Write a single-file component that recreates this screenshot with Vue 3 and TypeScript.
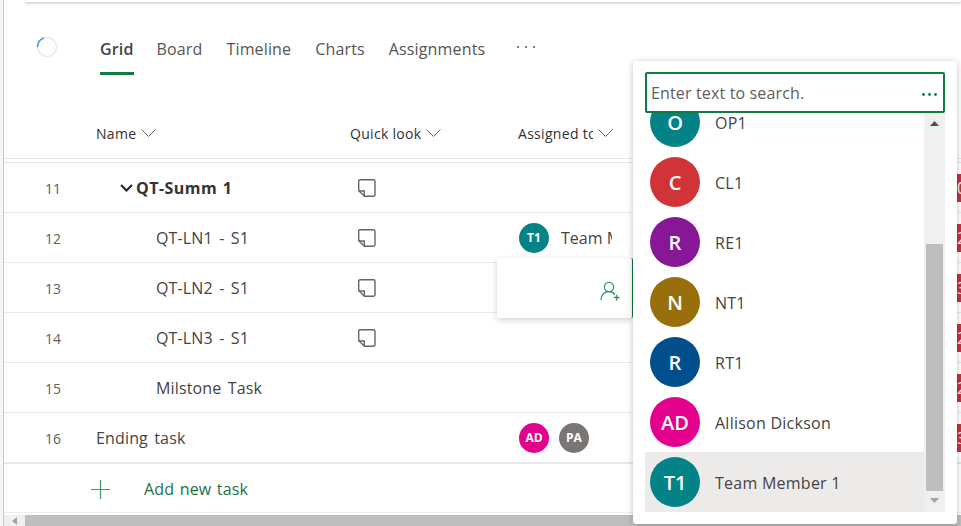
<template>
  <div class="page">
    <div class="gutter"></div>
    <div class="main">
      <div class="top-card"></div>

      <div class="toolbar">
        <svg class="spinner" width="24" height="24" viewBox="0 0 24 24">
          <circle cx="12" cy="12" r="9.5" fill="none" stroke="#deecf9" stroke-width="1.5" />
          <path d="M2.5 12A9.5 9.5 0 0 1 9 3" fill="none" stroke="#4a9be0" stroke-width="1.5" />
        </svg>
        <div class="tabs">
          <span
            v-for="tab in tabs"
            :key="tab"
            class="tab"
            :class="{ active: tab === 'Grid' }"
          >{{ tab }}</span>
        </div>
        <svg class="more" width="20" height="4" viewBox="0 0 20 4">
          <circle cx="2" cy="2" r="1.1" fill="#666" />
          <circle cx="10" cy="2" r="1.1" fill="#666" />
          <circle cx="18" cy="2" r="1.1" fill="#666" />
        </svg>
      </div>

      <div class="head">
        <div></div>
        <div class="head-cell">
          <span>Name</span>
          <svg class="chev" width="15" height="8" viewBox="0 0 15 8"><path d="M.5.5l7 7 7-7" /></svg>
        </div>
        <div class="head-cell">
          <span>Quick look</span>
          <svg class="chev" width="15" height="8" viewBox="0 0 15 8"><path d="M.5.5l7 7 7-7" /></svg>
        </div>
        <div class="head-cell">
          <span class="head-clip">Assigned to</span>
          <svg class="chev" width="15" height="8" viewBox="0 0 15 8"><path d="M.5.5l7 7 7-7" /></svg>
        </div>
      </div>

      <div class="rows">
        <div v-for="row in rows" :key="row.num" class="row">
          <div class="num">{{ row.num }}</div>
          <div class="name" :class="{ indent: row.indent, summary: row.summary }">
            <svg v-if="row.summary" class="caret" width="13" height="8" viewBox="0 0 13 8">
              <path d="M1 1l5.5 5.5L12 1" />
            </svg>
            {{ row.name }}
          </div>
          <div class="look">
            <svg v-if="row.note" width="18" height="18" viewBox="0 0 18 18" class="note">
              <path d="M2 .7h13.4a1.6 1.6 0 0 1 1.6 1.6v13.4a1.6 1.6 0 0 1-1.6 1.6H6.5L.7 11.8V2A1.3 1.3 0 0 1 2 .7z" />
              <path d="M.9 12H6.3v5.2" />
            </svg>
          </div>
          <div class="assigned">
            <span
              v-for="p in row.people"
              :key="p.initials"
              class="small-avatar"
              :style="{ background: p.color }"
            >{{ p.initials }}</span>
            <span v-if="row.assignee" class="assignee">{{ row.assignee }}</span>
          </div>
          <div class="spacer"></div>
          <div class="due"><span v-if="row.due" class="due-badge">{{ row.due }}</span></div>
        </div>
      </div>

      <div class="add-row">
        <svg width="19" height="19" viewBox="0 0 19 19" class="plus">
          <path d="M9.5 0v19M0 9.5h19" />
        </svg>
        <span class="add-label">Add new task</span>
      </div>

      <div class="hscroll">
        <svg width="5" height="8" viewBox="0 0 5 8"><path d="M5 0v8L0 4z" fill="#a3a3a3" /></svg>
        <div class="hthumb"></div>
      </div>
    </div>

    <div class="callout">
      <svg width="20" height="20" viewBox="0 0 20 20" class="add-person">
        <circle cx="9" cy="6" r="4.6" />
        <path d="M1 19c.4-5 3.4-8.3 8-8.3 2.600 0 4.700 1 6 3" />
        <path d="M13.800 16.500h5.700M16.700 13.700v5.700" />
      </svg>
    </div>

    <div class="picker">
      <div class="search">
        <span class="placeholder">Enter text to search.</span>
        <svg width="15" height="3" viewBox="0 0 15 3">
          <circle cx="1.500" cy="1.500" r="1.400" fill="#107c41" />
          <circle cx="7.500" cy="1.500" r="1.400" fill="#107c41" />
          <circle cx="13.500" cy="1.500" r="1.400" fill="#107c41" />
        </svg>
      </div>
      <div class="results">
        <div class="people">
          <div
            v-for="p in people"
            :key="p.name"
            class="person"
            :class="{ selected: p.selected }"
          >
            <span class="avatar" :style="{ background: p.color }">{{ p.initials }}</span>
            <span class="person-name">{{ p.name }}</span>
          </div>
        </div>
        <div class="vscroll">
          <svg width="9" height="5" viewBox="0 0 9 5" class="arrow-up"><path d="M0 5h9L4.500 0z" /></svg>
          <div class="vthumb"></div>
          <svg width="9" height="5" viewBox="0 0 9 5" class="arrow-down"><path d="M0 0h9L4.500 5z" /></svg>
        </div>
      </div>
    </div>
  </div>
</template>

<script setup lang="ts">
interface Person {
  initials: string
  color: string
}

interface Row {
  num: number
  name: string
  indent?: boolean
  summary?: boolean
  note?: boolean
  people?: Person[]
  assignee?: string
  due?: string
}

const tabs = ['Grid', 'Board', 'Timeline', 'Charts', 'Assignments']

const rows: Row[] = [
  { num: 11, name: 'QT-Summ 1', summary: true, note: true, due: '0' },
  {
    num: 12,
    name: 'QT-LN1 - S1',
    indent: true,
    note: true,
    people: [{ initials: 'T1', color: '#038387' }],
    assignee: 'Team Member 1',
    due: '2',
  },
  { num: 13, name: 'QT-LN2 - S1', indent: true, note: true, due: '3' },
  { num: 14, name: 'QT-LN3 - S1', indent: true, note: true, due: '2' },
  { num: 15, name: 'Milstone Task', indent: true, due: '2' },
  {
    num: 16,
    name: 'Ending task',
    people: [
      { initials: 'AD', color: '#e3008c' },
      { initials: 'PA', color: '#7a7574' },
    ],
    due: '3',
  },
]

const people = [
  { initials: 'O', name: 'OP1', color: '#038387' },
  { initials: 'C', name: 'CL1', color: '#d13438' },
  { initials: 'R', name: 'RE1', color: '#881798' },
  { initials: 'N', name: 'NT1', color: '#986f0b' },
  { initials: 'R', name: 'RT1', color: '#004e8c' },
  { initials: 'AD', name: 'Allison Dickson', color: '#e3008c' },
  { initials: 'T1', name: 'Team Member 1', color: '#038387', selected: true },
]
</script>

<style scoped>
.page {
  position: relative;
  display: flex;
  width: 961px;
  height: 526px;
  overflow: hidden;
  background: #fff;
  font-family: "Open Sans", "Liberation Sans", sans-serif;
  color: #444;
}
.gutter {
  flex: 0 0 3px;
  background: #f6f6f6;
  border-right: 1px solid #c8c8c8;
}
.main {
  flex: 1;
  min-width: 0;
  display: flex;
  flex-direction: column;
}
.top-card {
  flex: 0 0 2px;
  margin-left: 21px;
  background: #fff;
  border-radius: 0 0 4px 4px;
  box-shadow: 0 1px 3px #0000004d;
}
.toolbar {
  flex: 0 0 73px;
  display: flex;
  align-items: flex-start;
}
.spinner {
  margin: 33px 0 0 31px;
}
.tabs {
  display: flex;
  gap: 24px;
  margin-left: 41px;
  padding-top: 36px;
}
.tab {
  height: 34px;
  font-size: 16px;
  line-height: 22px;
  letter-spacing: .15px;
  color: #555;
  border-bottom: 3px solid transparent;
}
.tab.active {
  margin-right: -1px;
  font-weight: 600;
  color: #444;
  border-bottom-color: #107c41;
}
.more {
  margin: 43px 0 0 31px;
}
.head {
  flex: 0 0 84px;
  display: grid;
  grid-template-columns: 92px 254px 168px 1fr;
  align-items: start;
  box-sizing: border-box;
  border-bottom: 1px solid #e6e6e6;
}
.head-cell {
  display: flex;
  align-items: center;
  gap: 5px;
  padding-top: 49px;
  font-size: 14px;
  line-height: 20px;
  letter-spacing: .3px;
  color: #323130;
}
.head-clip {
  width: 75px;
  overflow: hidden;
  white-space: nowrap;
}
.chev {
  margin-top: -3px;
  fill: none;
  stroke: #666;
}
.rows {
  margin-top: 3px;
  border-top: 1px solid #e6e6e6;
}
.row {
  height: 49px;
  display: grid;
  grid-template-columns: 92px 254px 168px 94px 1fr 4px;
  align-items: center;
  border-bottom: 1px solid #e8e8e8;
}
.row:last-child {
  border-bottom-width: 2px;
}
.num {
  margin-top: 1px;
  text-align: center;
  padding-left: 6px;
  font-size: 14px;
  color: #605e5c;
}
.name {
  font-size: 16px;
  letter-spacing: .15px;
  word-spacing: 2px;
  white-space: nowrap;
}
.name.indent {
  padding-left: 60px;
}
.name.summary {
  display: flex;
  align-items: center;
  gap: 3px;
  padding-left: 24px;
  font-weight: 700;
  letter-spacing: .45px;
  word-spacing: 1px;
  color: #333;
}
.caret {
  fill: none;
  stroke: #222;
  stroke-width: 2;
}
.look {
  display: flex;
  align-items: center;
  padding-left: 8px;
}
.note {
  fill: none;
  stroke: #666;
  stroke-width: 1.400;
}
.assigned {
  display: flex;
  align-items: center;
  gap: 10px;
  overflow: hidden;
  padding-left: 1px;
  grid-column: 4 / 5;
}
.small-avatar {
  flex: 0 0 30px;
  height: 30px;
  border-radius: 50%;
  display: flex;
  align-items: center;
  justify-content: center;
  font-size: 12px;
  font-weight: 700;
  color: #fff;
}
.assignee {
  margin-left: 2px;
  font-size: 16px;
  white-space: nowrap;
}
.spacer {
  grid-column: 5 / 6;
}
.due {
  height: 28px;
  grid-column: 6 / 7;
  overflow: hidden;
}
.due-badge {
  display: block;
  width: 30px;
  height: 28px;
  background: #c8313a;
  color: #fff;
  font-size: 16px;
  line-height: 28px;
}
.add-row {
  flex: 0 0 46px;
  display: flex;
  align-items: center;
  padding-top: 2px;
  border-bottom: 1px solid #eee;
}
.plus {
  margin-left: 87px;
  fill: none;
  stroke: #3f9a68;
  stroke-width: 1.200;
}
.add-label {
  margin-left: 34px;
  font-size: 16px;
  letter-spacing: .2px;
  word-spacing: 1px;
  color: #217346;
}
.hscroll {
  flex: 1;
  margin-top: 2px;
  display: flex;
  align-items: center;
  background: #f0f0f0;
}
.hscroll svg {
  margin-left: 8px;
}
.hthumb {
  align-self: stretch;
  flex: 1;
  margin-left: 8px;
  background: #bebebe;
}
.callout {
  position: absolute;
  left: 497px;
  top: 258px;
  width: 136px;
  height: 60px;
  box-sizing: border-box;
  display: flex;
  align-items: flex-end;
  justify-content: flex-end;
  padding: 0 12px 17px 0;
  background: #fff;
  border-right: 1px solid #107c41;
  border-radius: 2px;
  box-shadow: 0 2px 6px #0000002e;
}
.add-person {
  fill: none;
  stroke: #2f9460;
  stroke-width: 1.300;
}
.picker {
  position: absolute;
  left: 633px;
  top: 61px;
  width: 324px;
  height: 463px;
  box-sizing: border-box;
  padding: 11px 12px 12px;
  display: flex;
  flex-direction: column;
  background: #fff;
  border-radius: 3px;
  box-shadow: 0 1px 6px #00000040;
}
.search {
  flex: 0 0 41px;
  box-sizing: border-box;
  position: relative;
  z-index: 1;
  display: flex;
  align-items: center;
  justify-content: space-between;
  padding: 0 6px 0 4px;
  background: #fff;
  border: 2px solid #107c41;
  border-radius: 2px;
}
.placeholder {
  font-size: 16px;
  letter-spacing: .15px;
  color: #605e5c;
}
.search svg {
  margin-top: 3px;
}
.results {
  flex: 1;
  min-height: 0;
  display: flex;
  overflow: hidden;
}
.people {
  flex: 1;
  margin-top: -21px;
}
.person {
  height: 60px;
  display: flex;
  align-items: center;
  padding-left: 5px;
}
.person.selected {
  background: #edebe9;
}
.avatar {
  flex: 0 0 50px;
  height: 50px;
  border-radius: 50%;
  display: flex;
  align-items: center;
  justify-content: center;
  font-size: 20px;
  font-weight: 600;
  color: #fff;
}
.person-name {
  margin: 2px 0 0 15px;
  font-size: 16px;
  letter-spacing: .25px;
  color: #444;
}
.vscroll {
  flex: 0 0 21px;
  display: flex;
  flex-direction: column;
  align-items: center;
  background: #f0f0f0;
}
.arrow-up {
  margin-top: 8px;
  fill: #505050;
}
.vthumb {
  width: 17px;
  height: 247px;
  margin-top: 118px;
  background: #bebebe;
}
.arrow-down {
  margin-top: 7px;
  fill: #a3a3a3;
}
</style>
